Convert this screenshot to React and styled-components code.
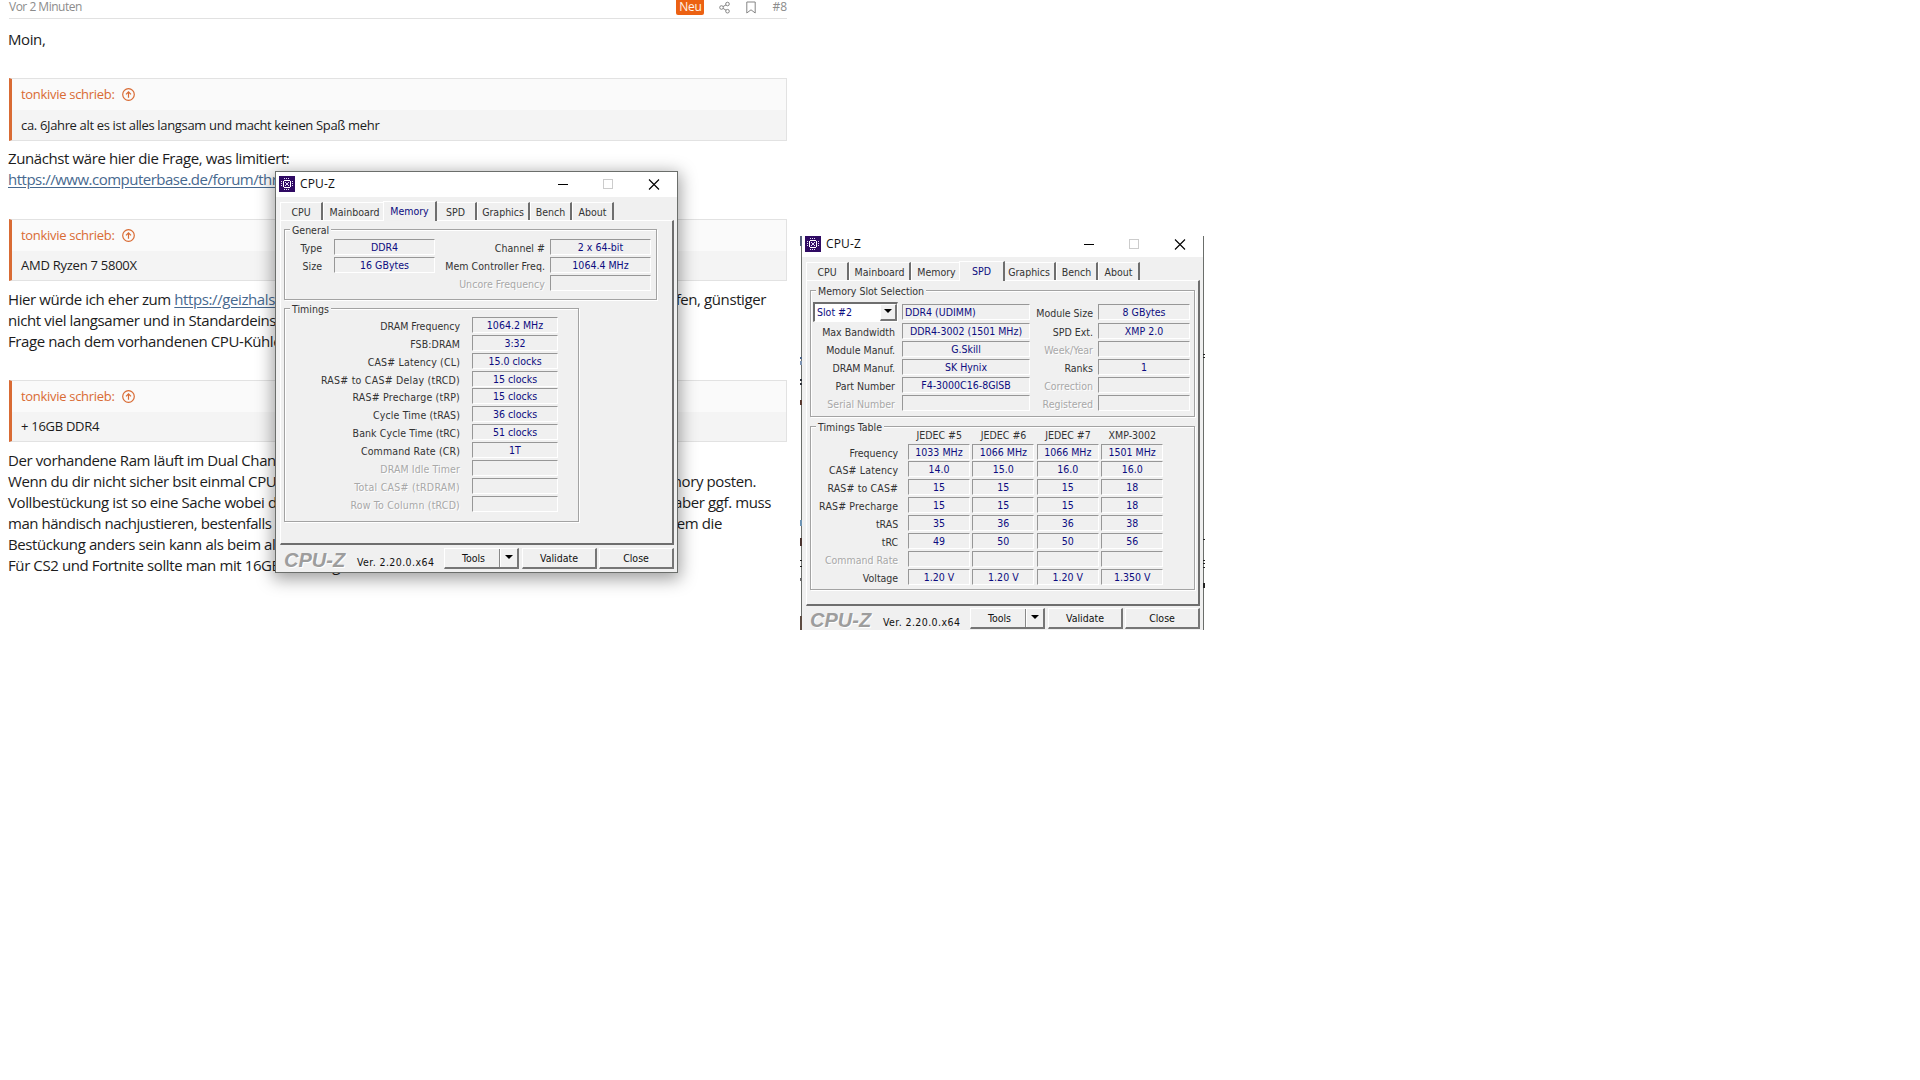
import React from 'react';
import styled, { createGlobalStyle, css } from 'styled-components';

const orange = '#d96b34';
const navy = '#0c0c80';
const face = '#f0f0f0';

const GlobalStyle = createGlobalStyle`
  * {
    box-sizing: border-box;
  }
  body {
    margin: 0;
    background: white;
    overflow: hidden;
  }
`;

const Desktop = styled.div`
  position: relative;
  width: 1920px;
  height: 1080px;
  overflow: hidden;
`;

/* forum post */

const Post = styled.article`
  width: 787px;
  padding-left: 9px;
  font-family: 'Open Sans', 'Noto Sans', sans-serif;
  color: #1c1c1c;
`;

const PostHeader = styled.header`
  display: flex;
  align-items: center;
  height: 19px;
  padding-bottom: 4px;
  border-bottom: 1px solid #e1e1e1;
  font-size: 12px;
  line-height: 14px;
  color: #8c8c8c;
`;

const PostDate = styled.span`
  flex: 1;
  letter-spacing: -0.5px;
`;

const NewBadge = styled.span`
  width: 28px;
  height: 15px;
  margin-right: 15px;
  border-radius: 0 0 2px 2px;
  background: #ec6112;
  color: #fff3e8;
  text-align: center;
  letter-spacing: -0.3px;
`;

const HeaderIcon = styled.svg`
  width: ${p => p.$width}px;
  height: 13px;
  margin-right: 16px;
  fill: none;
  stroke: #858585;
`;

const Paragraph = styled.div`
  padding-top: ${p => p.$top}px;
`;

const Line = styled.div`
  display: flex;
  height: 21px;
  margin-left: -1px;
  font-size: 15px;
  line-height: 21px;
  white-space: pre;
  letter-spacing: ${p => p.$track || -0.4}px;
`;

const LineEnd = styled.span`
  margin-left: auto;
  padding-right: ${p => p.$right}px;
  letter-spacing: -0.4px;
`;

const Link = styled.a`
  color: #47698f;
  text-decoration: underline;
  text-underline-offset: 2px;
`;

const Quote = styled.blockquote`
  height: ${p => p.$height || 62}px;
  margin: ${p => p.$top}px 0 0;
  border: 1px solid #e2e2e2;
  border-left: 3px solid ${orange};
  background: #f4f4f4;
  font-size: 13px;
  line-height: ${p => (p.$height ? 30 : 29)}px;
`;

const QuoteAuthor = styled.div`
  display: flex;
  align-items: center;
  gap: 7px;
  height: 31px;
  padding: 0 0 1px 9px;
  background: #fafafa;
  color: ${orange};
  letter-spacing: -0.3px;
  line-height: 29px;
`;

const QuoteText = styled.div`
  padding-left: 9px;
  letter-spacing: ${p => p.$track || -0.34}px;
`;

/* CPU-Z window */

const Frame = styled.section`
  position: absolute;
  left: ${p => p.$left}px;
  top: ${p => p.$top}px;
  display: flex;
  flex-direction: column;
  width: 403px;
  height: ${p => (p.$cropped ? 394 : 402)}px;
  overflow: hidden;
  border: 1px solid #6b6e6b;
  background: ${face};
  font-family: 'DejaVu Sans Condensed', 'DejaVu Sans', sans-serif;
  font-stretch: condensed;
  font-size: 10.5px;
  color: #333;
  white-space: pre;
  ${p =>
    p.$cropped
      ? css`
          border-width: 0 1px;
        `
      : css`
          box-shadow: 0 4px 16px 2px rgba(0, 0, 0, 0.38);
        `}
`;

const TitleBar = styled.div`
  display: flex;
  align-items: center;
  flex: none;
  height: ${p => (p.$cropped ? 21 : 25)}px;
  padding: ${p => (p.$cropped ? '0 17px 5px 3px' : '0 17px 1px 3px')};
  background: white;
`;

const Caption = styled.span`
  flex: 1;
  padding: 0 0 1px 5px;
  font: 12px 'Open Sans', sans-serif;
  letter-spacing: 0.15px;
  color: #111;
`;

const Controls = styled.svg`
  width: 102px;
  height: 11px;
  fill: none;
`;

const TabBar = styled.div`
  display: flex;
  align-items: flex-end;
  flex: none;
  height: 23px;
  padding-left: 4px;
`;

const Tab = styled.div`
  width: ${p => p.$width}px;
  height: 18px;
  border-top: 1px solid white;
  border-left: 1px solid white;
  border-right: 2px solid #6e6e6e;
  line-height: 19px;
  text-align: center;
  ${p =>
    p.$noEdge &&
    css`
      border-right: 0;
    `}
  ${p =>
    p.$active &&
    css`
      z-index: 1;
      width: ${p.$width + 4}px;
      height: 20px;
      margin: 0 -2px -1px;
      background: ${face};
      color: ${navy};
    `}
`;

const Panel = styled.div`
  flex: none;
  width: 394px;
  height: ${p => (p.$cropped ? 326 : 325)}px;
  margin-left: 4px;
  padding: ${p => (p.$cropped ? 9 : 8)}px 0 0 3px;
  border: 1px solid white;
  border-right: 2px solid #6e6e6e;
  border-bottom: 2px solid #6e6e6e;
`;

const Group = styled.div`
  width: ${p => p.$width}px;
  height: ${p => p.$height}px;
  margin-bottom: ${p => p.$gap || 0}px;
  border: 1px solid #a3a3a3;
  box-shadow: 1px 1px 0 white, inset 1px 1px 0 white;
`;

const Legend = styled.div`
  width: fit-content;
  height: 13px;
  margin: -7px 0 0 5px;
  padding: 0 2px;
  background: ${face};
  line-height: 14px;
`;

const Columns = styled.div`
  display: flex;
  padding-top: ${p => p.$top || 0}px;
`;

const Column = styled.div`
  width: ${p => p.$width}px;
`;

const Row = styled.div`
  display: flex;
  height: ${p => p.$height || 18}px;
  gap: ${p => p.$gap || 0}px;
`;

const Label = styled.span`
  width: ${p => p.$width}px;
  padding-top: 2px;
  line-height: 15px;
  text-align: right;
  letter-spacing: ${p => p.$track || 0}px;
  ${p =>
    p.$off &&
    css`
      color: #a8a8a8;
      text-shadow: 1px 1px 0 white;
    `}
`;

const Field = styled.span`
  width: ${p => p.$width}px;
  height: 16px;
  padding-left: ${p => (p.$start ? 2 : 0)}px;
  border: 1px solid white;
  border-top-color: #979797;
  border-left-color: #979797;
  line-height: 14px;
  text-align: ${p => (p.$start ? 'left' : 'center')};
  color: ${navy};
`;

const TableHead = styled.div`
  display: flex;
  gap: 2px;
  height: 16px;
  margin-top: -5px;
  padding-left: 97px;
  line-height: 15px;
  text-align: center;

  span {
    width: 62.4px;
  }
`;

const Select = styled.div`
  display: flex;
  justify-content: space-between;
  width: 85px;
  height: 20px;
  margin: -2px 4px 0 2px;
  padding-left: 2px;
  border: 1px solid #fff;
  border-top: 2px solid #6e6e6e;
  border-left: 2px solid #6e6e6e;
  background: white;
  color: ${navy};
  line-height: 16px;
`;

const Raised = styled.span`
  display: flex;
  align-items: center;
  justify-content: center;
  width: ${p => p.$width}px;
  height: ${p => p.$height}px;
  border: 1px solid white;
  border-right: 2px solid #767676;
  border-bottom: 2px solid #767676;
  background: ${face};
  color: #111;
`;

const Footer = styled.div`
  display: flex;
  flex: none;
  padding: ${p => (p.$cropped ? 2 : 3)}px 0 0 8px;
`;

const Logo = styled.span`
  width: 73px;
  padding-top: 1px;
  font: italic bold 20px/22px 'Liberation Sans', sans-serif;
  color: #9d9d9d;
  text-shadow: 1px 1px 0 white;
`;

const Version = styled.span`
  width: 87px;
  padding-top: 6px;
  line-height: 16px;
  letter-spacing: 0.42px;
  color: #111;
`;

const ButtonText = styled.span`
  flex: 1;
  padding-left: 3px;
  text-align: center;
`;

const Divider = styled.i`
  width: 2px;
  height: 18px;
  border-left: 1px solid #888;
  border-right: 1px solid white;
`;

const Arrow = styled.i`
  margin: 0 4px 3px 4px;
  border: 4px solid transparent;
  border-top-color: black;
  border-bottom: 0;
`;

/* slivers of the page that lies behind the cropped window */
const Sliver = styled.div`
  position: absolute;
  left: ${p => p.$left}px;
  top: 236px;
  width: 2px;
  height: 394px;
  background: linear-gradient(
    ${p =>
      p.$marks
        .map(
          ([y, h, color]) =>
            `transparent ${y}px, ${color} ${y}px, ${color} ${y + h}px, transparent ${y + h}px`
        )
        .join(', ')}
  );
`;

const leftMarks = [
  [0, 10, '#56617c'],
  [121, 2, '#4c6385'],
  [125, 4, '#7b92b1'],
  [143, 2, '#2c3038'],
  [147, 2, '#2c3038'],
  [164, 5, '#5a3a30'],
  [284, 6, '#6d93b3'],
  [302, 8, '#4b342f'],
  [324, 1, '#222'],
  [330, 1, '#222'],
  [342, 3, '#6a6a6a'],
  [380, 14, '#5d4b41'],
];

const rightMarks = [
  [118, 1, '#222'],
  [121, 1, '#222'],
  [303, 1, '#222'],
  [324, 1, '#222'],
  [327, 1, '#222'],
  [331, 1, '#222'],
  [347, 5, '#222'],
];

const ChipIcon = () => (
  <svg width="16" height="16" viewBox="0 0 16 16" shapeRendering="crispEdges">
    <rect width="16" height="16" fill="#2f0a63" />
    <path d="M5 4h6v1h1v6h-1v1H5v-1H4V5h1zM5 5v6h6V5z" fill="#fff" fillRule="evenodd" />
    <path
      d="M5 2.5h6M5 13.5h6M2.5 5v6M13.5 5v6"
      stroke="#e8defa"
      strokeDasharray="1 1"
    />
    <path d="M6 6h1v1H6zM9 6h1v1H9zM6 9h1v1H6zM9 9h1v1H9zM7 7h2v2H7z" fill="#e0d4f8" />
  </svg>
);

const UpIcon = () => (
  <svg width="13" height="13" viewBox="0 0 13 13" fill="none" stroke={orange} strokeWidth="1.2">
    <circle cx="6.5" cy="6.5" r="5.8" />
    <path d="M6.5 9.8V3.8M4 6.3l2.5-2.5L9 6.3" />
  </svg>
);

const tabs = [
  ['CPU', 43],
  ['Mainboard', 62],
  ['Memory', 50],
  ['SPD', 42],
  ['Graphics', 53],
  ['Bench', 42],
  ['About', 42],
];

const CpuzWindow = ({ left, top, cropped, active, children }) => (
  <Frame $left={left} $top={top} $cropped={cropped}>
    <TitleBar $cropped={cropped}>
      <ChipIcon />
      <Caption>CPU-Z</Caption>
      <Controls viewBox="0 0 102 11">
        <path d="M0 5.5h10" stroke="#000" shapeRendering="crispEdges" />
        <rect x="45.5" y="0.5" width="9" height="9" stroke="#ccc" />
        <path d="M91 0.5l10 10M101 0.5l-10 10" stroke="#000" strokeWidth="1.1" />
      </Controls>
    </TitleBar>
    <TabBar>
      {tabs.map(([name, width], i) => (
        <Tab
          key={name}
          $width={width}
          $active={name === active}
          $noEdge={tabs[i + 1] && tabs[i + 1][0] === active}
        >
          {name}
        </Tab>
      ))}
    </TabBar>
    <Panel $cropped={cropped}>{children}</Panel>
    <Footer $cropped={cropped}>
      <Logo>CPU-Z</Logo>
      <Version>Ver. 2.20.0.x64</Version>
      <Columns>
        <Raised $width={75} $height={21}>
          <ButtonText>Tools</ButtonText>
          <Divider />
          <Arrow />
        </Raised>
        <Column $width={3} />
        <Raised $width={75} $height={21}>Validate</Raised>
        <Column $width={2} />
        <Raised $width={75} $height={21}>Close</Raised>
      </Columns>
    </Footer>
  </Frame>
);

const timings = [
  ['DRAM Frequency', '1064.2 MHz'],
  ['FSB:DRAM', '3:32', 0.1],
  ['CAS# Latency (CL)', '15.0 clocks', 0.16],
  ['RAS# to CAS# Delay (tRCD)', '15 clocks', 0.24],
  ['RAS# Precharge (tRP)', '15 clocks', 0.21],
  ['Cycle Time (tRAS)', '36 clocks', 0.14],
  ['Bank Cycle Time (tRC)', '51 clocks', 0.1],
  ['Command Rate (CR)', '1T', 0.14],
  ['DRAM Idle Timer', '', 0.1],
  ['Total CAS# (tRDRAM)', '', 0.28],
  ['Row To Column (tRCD)', '', 0.2],
];

const moduleInfo = [
  ['Max Bandwidth', 'DDR4-3002 (1501 MHz)'],
  ['Module Manuf.', 'G.Skill'],
  ['DRAM Manuf.', 'SK Hynix'],
  ['Part Number', 'F4-3000C16-8GISB'],
  ['Serial Number', ''],
];

const moduleExtra = [
  ['Module Size', '8 GBytes', 19],
  ['SPD Ext.', 'XMP 2.0'],
  ['Week/Year', ''],
  ['Ranks', '1'],
  ['Correction', ''],
  ['Registered', ''],
];

const table = [
  ['Frequency', ['1033 MHz', '1066 MHz', '1066 MHz', '1501 MHz'], 17],
  ['CAS# Latency', ['14.0', '15.0', '16.0', '16.0']],
  ['RAS# to CAS#', ['15', '15', '15', '18']],
  ['RAS# Precharge', ['15', '15', '15', '18']],
  ['tRAS', ['35', '36', '36', '38']],
  ['tRC', ['49', '50', '50', '56']],
  ['Command Rate', ['', '', '', '']],
  ['Voltage', ['1.20 V', '1.20 V', '1.20 V', '1.350 V']],
];

const QuoteBox = ({ top, height, track, text }) => (
  <Quote $top={top} $height={height}>
    <QuoteAuthor>
      tonkivie schrieb: <UpIcon />
    </QuoteAuthor>
    <QuoteText $track={track}>{text}</QuoteText>
  </Quote>
);

const ForumPost = () => (
  <Post>
    <PostHeader>
      <PostDate>Vor 2 Minuten</PostDate>
      <NewBadge>Neu</NewBadge>
      <HeaderIcon $width={11} viewBox="0 0 11 13">
        <circle cx="2.5" cy="6.5" r="1.8" />
        <circle cx="8.5" cy="3" r="1.8" />
        <circle cx="8.5" cy="10.2" r="1.8" />
        <path d="M4 5.6l3-1.7M4 7.4l3 1.8" />
      </HeaderIcon>
      <HeaderIcon $width={10} viewBox="0 0 10 13">
        <path d="M0.8 1h8.4v11L5 8.8 0.8 12z" />
      </HeaderIcon>
      #8
    </PostHeader>
    <Paragraph $top={10}>
      <Line>Moin,</Line>
    </Paragraph>
    <QuoteBox top={28} height={63} text="ca. 6Jahre alt es ist alles langsam und macht keinen Spaß mehr" />
    <Paragraph $top={7}>
      <Line>Zunächst wäre hier die Frage, was limitiert:</Line>
      <Line $track={-0.5}>
        <Link>https://www.computerbase.de/forum/thr</Link>
      </Line>
    </Paragraph>
    <QuoteBox top={29} track={-0.25} text="AMD Ryzen 7 5800X" />
    <Paragraph $top={8}>
      <Line>
        Hier würde ich eher zum <Link>https://geizhals</Link>
        <LineEnd $right={21}>fen, günstiger</LineEnd>
      </Line>
      <Line>nicht viel langsamer und in Standardeins</Line>
      <Line>Frage nach dem vorhandenen CPU-Kühle</Line>
    </Paragraph>
    <QuoteBox top={28} track={-0.28} text="+ 16GB DDR4" />
    <Paragraph $top={8}>
      <Line>Der vorhandene Ram läuft im Dual Chan</Line>
      <Line>
        Wenn du dir nicht sicher bsit einmal CPU
        <LineEnd $right={31}>mory posten.</LineEnd>
      </Line>
      <Line>
        Vollbestückung ist so eine Sache wobei d
        <LineEnd $right={16}>aber ggf. muss</LineEnd>
      </Line>
      <Line $track={-0.46}>
        man händisch nachjustieren, bestenfalls s
        <LineEnd $right={65}>dem die</LineEnd>
      </Line>
      <Line>Bestückung anders sein kann als beim alt</Line>
      <Line>
        Für CS2 und Fortnite sollte man mit 16GB
        <LineEnd $right={447}>g</LineEnd>
      </Line>
    </Paragraph>
  </Post>
);

const App = () => (
  <Desktop>
    <GlobalStyle />
    <ForumPost />
    <CpuzWindow left={275} top={171} active="Memory">
      <Group $width={373} $height={71} $gap={8}>
        <Legend>General</Legend>
        <Columns $top={3}>
          <Column $width={150}>
            {[['Type', 'DDR4'], ['Size', '16 GBytes']].map(([name, value]) => (
              <Row key={name} $gap={12}>
                <Label $width={37}>{name}</Label>
                <Field $width={101}>{value}</Field>
              </Row>
            ))}
          </Column>
          <Column $width={216}>
            {[
              ['Channel #', '2 x 64-bit'],
              ['Mem Controller Freq.', '1064.4 MHz'],
              ['Uncore Frequency', ''],
            ].map(([name, value]) => (
              <Row key={name} $gap={5}>
                <Label $width={110} $track={0.05} $off={!value}>{name}</Label>
                <Field $width={101}>{value}</Field>
              </Row>
            ))}
          </Column>
        </Columns>
      </Group>
      <Group $width={295} $height={214}>
        <Legend>Timings</Legend>
        <Columns $top={2}>
          <Column $width={273}>
            {timings.map(([name, value, track], i) => (
              <Row key={name} $height={i === 3 ? 17 : 18} $gap={12}>
                <Label $width={175} $track={track} $off={!value}>{name}</Label>
                <Field $width={86}>{value}</Field>
              </Row>
            ))}
          </Column>
        </Columns>
      </Group>
    </CpuzWindow>
    <CpuzWindow left={801} top={236} cropped active="SPD">
      <Group $width={385} $height={127} $gap={9}>
        <Legend>Memory Slot Selection</Legend>
        <Columns $top={7}>
          <Column $width={220}>
            <Row $height={19}>
              <Select>
                Slot #2
                <Raised $width={17} $height={17}>
                  <Arrow />
                </Raised>
              </Select>
              <Field $width={128} $start>DDR4 (UDIMM)</Field>
            </Row>
            {moduleInfo.map(([name, value]) => (
              <Row key={name} $gap={7}>
                <Label $width={84} $off={!value}>{name}</Label>
                <Field $width={128}>{value}</Field>
              </Row>
            ))}
          </Column>
          <Column $width={160}>
            {moduleExtra.map(([name, value, height]) => (
              <Row key={name} $height={height} $gap={5}>
                <Label $width={62} $off={!value}>{name}</Label>
                <Field $width={92}>{value}</Field>
              </Row>
            ))}
          </Column>
        </Columns>
      </Group>
      <Group $width={385} $height={164}>
        <Legend>Timings Table</Legend>
        <TableHead>
          <span>JEDEC #5</span>
          <span>JEDEC #6</span>
          <span>JEDEC #7</span>
          <span>XMP-3002</span>
        </TableHead>
        {table.map(([name, values, height]) => (
          <Row key={name} $height={height} $gap={2.4}>
            <Label $width={87.2} $track={name.includes('#') ? 0.15 : 0} $off={!values[0]}>
              {name}
            </Label>
            <Column $width={5} />
            {values.map((value, i) => (
              <Field key={i} $width={62}>{value}</Field>
            ))}
          </Row>
        ))}
      </Group>
    </CpuzWindow>
    <Sliver $left={800} $marks={leftMarks} />
    <Sliver $left={1203} $marks={rightMarks} />
  </Desktop>
);

export default App;
